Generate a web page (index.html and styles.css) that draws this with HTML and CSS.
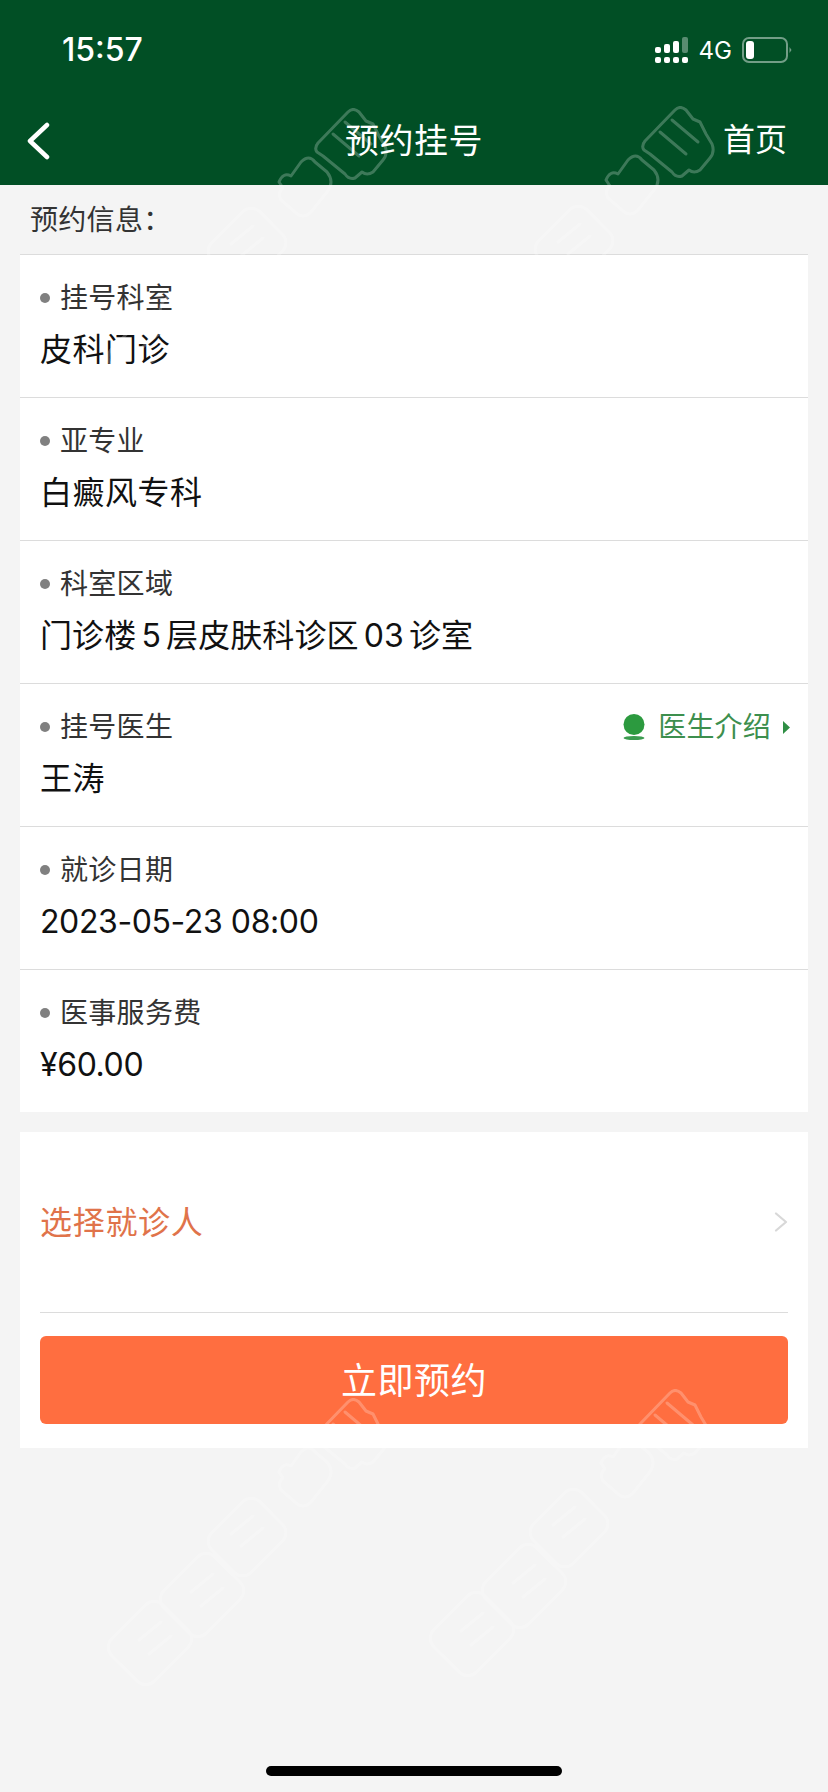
FILE: index.html
```html
<!DOCTYPE html>
<html lang="zh-CN">
<head>
<meta charset="utf-8">
<title>预约挂号</title>
<link rel="stylesheet" href="styles.css">
</head>
<body>
<div class="page">
  <header class="header">
    <div class="status">
      <span class="time">15:57</span>
      <div class="status-right">
        <svg class="signal" width="34" height="27" viewBox="0 0 34 27">
          <g fill="#fff">
            <rect x="0" y="10" width="6" height="6" rx="2"/>
            <rect x="9" y="7" width="6" height="9" rx="2"/>
            <rect x="18" y="4" width="6" height="12" rx="2"/>
            <rect x="0" y="20" width="6" height="6" rx="2"/>
            <rect x="9" y="20" width="6" height="6" rx="2"/>
            <rect x="18" y="20" width="6" height="6" rx="2"/>
            <rect x="27" y="20" width="6" height="6" rx="2"/>
          </g>
          <rect x="27" y="0" width="6" height="16" rx="2" fill="#fff" opacity=".35"/>
        </svg>
        <span class="net">4G</span>
        <svg class="battery" width="50" height="26" viewBox="0 0 50 26">
          <rect x="1" y="1" width="44" height="24" rx="6" fill="none" stroke="#fff" stroke-opacity=".45" stroke-width="2"/>
          <rect x="4" y="4" width="8" height="18" rx="3" fill="#fff"/>
          <path d="M47.500 10 L49.500 13 L47.500 16 Z" fill="#fff" opacity=".45"/>
        </svg>
      </div>
    </div>
    <nav class="nav">
      <svg class="back" width="24" height="38" viewBox="0 0 24 38">
        <path d="M21 3 L4 19 L21 35" fill="none" stroke="#fff" stroke-width="4.500" stroke-linecap="round" stroke-linejoin="round"/>
      </svg>
      <h1 class="title">预约挂号</h1>
      <a class="home">首页</a>
    </nav>
  </header>

  <div class="section-label">预约信息：</div>

  <section class="card">
    <div class="row">
      <div class="label"><i class="dot"></i>挂号科室</div>
      <div class="value">皮科门诊</div>
    </div>
    <div class="row">
      <div class="label"><i class="dot"></i>亚专业</div>
      <div class="value">白癜风专科</div>
    </div>
    <div class="row">
      <div class="label"><i class="dot"></i>科室区域</div>
      <div class="value value-mixed">门诊楼 5 层皮肤科诊区 03 诊室</div>
    </div>
    <div class="row">
      <div class="label-line">
        <div class="label"><i class="dot"></i>挂号医生</div>
        <a class="intro">
          <svg class="intro-icon" width="22" height="26" viewBox="0 0 22 26">
            <circle cx="11" cy="10.500" r="10.500" fill="#2c9a3f"/>
            <ellipse cx="11" cy="24" rx="10.500" ry="2" fill="#3c9c50"/>
          </svg>
          <span>医生介绍</span>
          <svg class="intro-caret" width="7" height="13" viewBox="0 0 7 13"><path d="M0 0 L7 6.500 L0 13 Z" fill="#2f8f45"/></svg>
        </a>
      </div>
      <div class="value">王涛</div>
    </div>
    <div class="row">
      <div class="label"><i class="dot"></i>就诊日期</div>
      <div class="value value-num">2023-05-23 08:00</div>
    </div>
    <div class="row">
      <div class="label"><i class="dot"></i>医事服务费</div>
      <div class="value value-num">¥60.00</div>
    </div>
  </section>

  <section class="card booking">
    <div class="picker">
      <span class="picker-text">选择就诊人</span>
      <svg width="14" height="20" viewBox="0 0 14 20"><path d="M2 1.500 L12 10 L2 18.500" fill="none" stroke="#d8d8d8" stroke-width="2.200" stroke-linecap="round" stroke-linejoin="round"/></svg>
    </div>
    <button class="submit">立即预约</button>
  </section>

  <div class="home-bar"></div>

  <svg class="watermark" width="828" height="1792" viewBox="0 0 828 1792">
    <defs>
      <g id="wm" fill="none" stroke="#fff" stroke-width="3" stroke-linejoin="round" stroke-linecap="round">
        <path d="M-5 2 Q0 -3 6 2 L13 11 L20 14 L26 26 L32 36 Q35 44 30 50 L20 62 Q14 66 9 62 L2 68 Q-4 70 -8 64 L-30 46 L-36 42 Q-39 38 -35 33 Z"/>
        <path d="M-20 24 L6 46 M-8 12 L18 34"/>
        <path d="M-52 52 Q-44 44 -38 52 L-26 62 Q-18 72 -26 82 L-42 102 Q-50 110 -58 102 L-72 90 Q-76 82 -70 78 L-74 72 Q-70 62 -62 66 Z"/>
        <rect x="-34" y="-28" width="68" height="56" rx="12" transform="translate(-106 137) rotate(-45)"/>
        <path d="M-122 134 L-100 116 M-112 146 L-90 128"/>
        <rect x="-36" y="-30" width="72" height="60" rx="12" transform="translate(-151 195) rotate(-45)"/>
        <path d="M-162 192 L-140 174 M-152 206 L-130 188"/>
        <rect x="-36" y="-30" width="72" height="60" rx="12" transform="translate(-203 243) rotate(-45)"/>
        <path d="M-214 240 L-192 222 M-204 254 L-182 236"/>
      </g>
    </defs>
    <g opacity=".24">
      <use href="#wm" x="353" y="110"/>
      <use href="#wm" x="680" y="108"/>
      <use href="#wm" x="353" y="1400"/>
      <use href="#wm" x="675" y="1391"/>
    </g>
  </svg>
</div>
</body>
</html>
```
FILE: styles.css
```css
* { box-sizing: border-box; }
html, body { margin: 0; padding: 0; }
body {
  font-family: "Inter", "Noto Sans CJK SC", sans-serif;
  background: #f4f4f4;
  color: #111;
}
.page {
  position: relative;
  width: 828px;
  height: 1792px;
  overflow: hidden;
  display: flex;
  flex-direction: column;
  background: #f4f4f4;
}
.header { height: 185px; background: #014f25; color: #fff; flex: none; }
.status {
  height: 96px;
  padding: 2px 36px 0 62px;
  display: flex;
  align-items: center;
  justify-content: space-between;
}
.time { font-size: 32px; font-weight: 500; }
.status-right { display: flex; align-items: center; padding-top: 2px; }
.signal { display: block; }
.net { font-size: 24px; margin-left: 10px; margin-right: 10px; }
.battery { display: block; }
.nav {
  height: 89px;
  padding: 0 41px 0 26px;
  display: flex;
  align-items: center;
  justify-content: space-between;
  position: relative;
}
.title {
  margin: 0 0 4px;
  font-size: 34px;
  font-weight: 400;
  line-height: 1;
  letter-spacing: .5px;
  position: absolute;
  left: 0;
  right: 0;
  text-align: center;
  font-family: "Noto Sans CJK SC", sans-serif;
}
.home { font-size: 32px; line-height: 1; margin-bottom: 2px; }
.section-label {
  height: 69px;
  padding: 0 0 4px 30px;
  display: flex;
  align-items: center;
  font-size: 28px;
  letter-spacing: .3px;
  color: #333;
  flex: none;
}
.card {
  margin: 0 20px;
  background: #fff;
  flex: none;
}
.row {
  height: 143px;
  border-top: 1px solid #dcdcdc;
  padding: 23px 20px 0;
}
.label-line { display: flex; justify-content: space-between; align-items: center; }
.label {
  display: flex;
  align-items: center;
  font-size: 28px;
  line-height: 40px;
  letter-spacing: .3px;
  color: #333;
}
.dot {
  width: 10px;
  height: 10px;
  border-radius: 50%;
  background: #808080;
  margin-right: 10px;
}
.value {
  margin-top: 10px;
  font-size: 32px;
  line-height: 44px;
  letter-spacing: .5px;
  color: #111;
}
.value-mixed { word-spacing: -4px; letter-spacing: .1px; }
.value-num { letter-spacing: -.4px; }
.intro {
  display: flex;
  align-items: center;
  font-size: 28px;
  line-height: 40px;
  letter-spacing: .2px;
  color: #3d8f4e;
  margin-right: -2px;
}
.intro-icon { margin-right: 13px; }
.intro-caret { margin-left: 12px; }
.booking { margin-top: 20px; padding: 0 20px 24px; }
.picker {
  height: 181px;
  border-bottom: 1px solid #dcdcdc;
  display: flex;
  align-items: center;
  justify-content: space-between;
}
.picker-text { font-size: 32px; letter-spacing: .7px; color: #e0734a; margin-bottom: 4px; }
.submit {
  display: block;
  width: 100%;
  height: 88px;
  margin-top: 23px;
  border: 0;
  border-radius: 6px;
  background: #ff6e40;
  color: #fff;
  font-family: inherit;
  font-size: 36px;
  letter-spacing: .5px;
  padding: 0 0 5px;
}
.home-bar {
  width: 296px;
  height: 10px;
  border-radius: 5px;
  background: #000;
  margin: auto auto 16px;
  flex: none;
}
.watermark { position: absolute; left: 0; top: 0; pointer-events: none; }
```
